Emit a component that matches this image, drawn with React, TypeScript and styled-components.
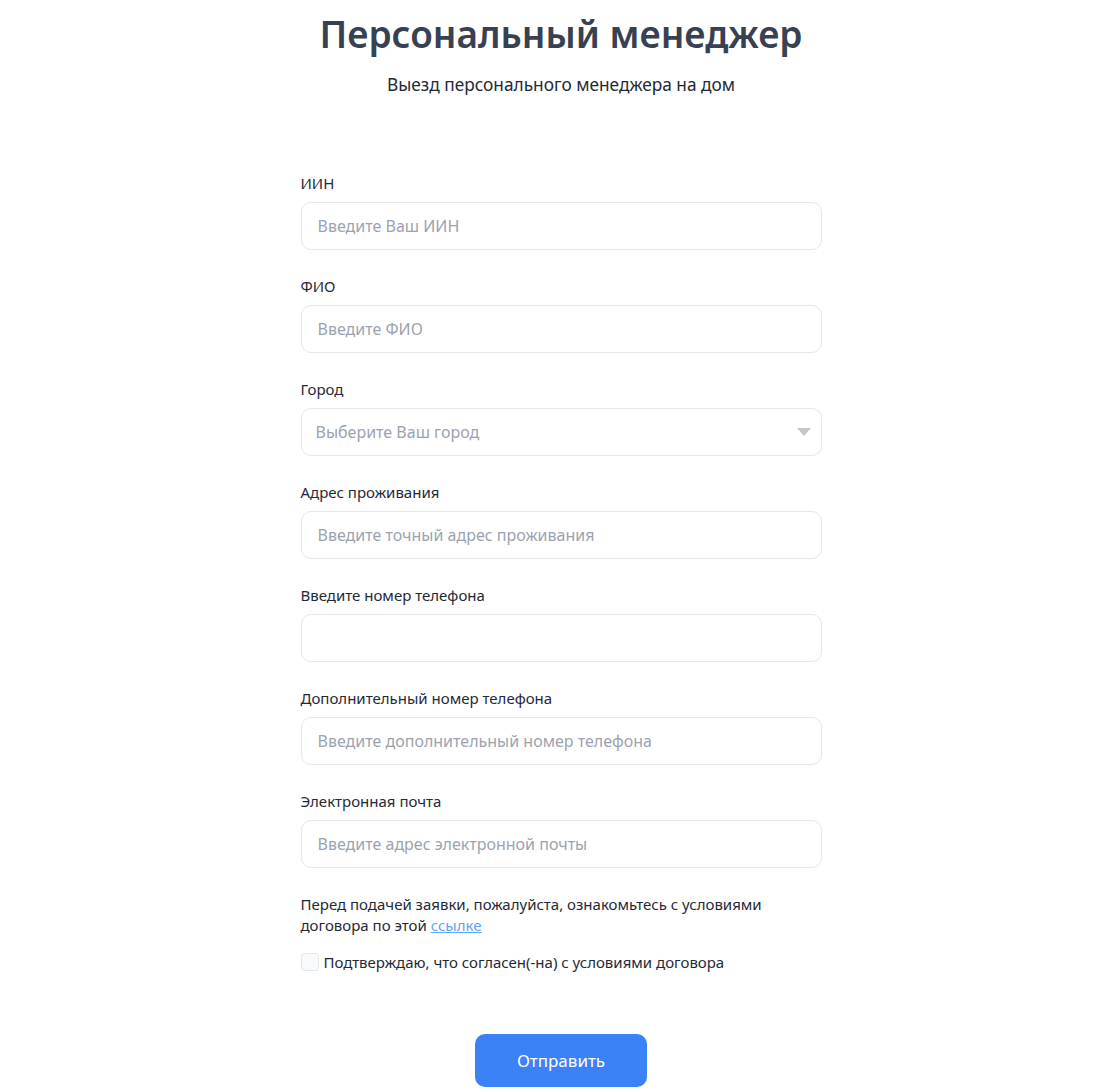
import React from "react";
import styled, { createGlobalStyle } from "styled-components";

const GlobalStyle = createGlobalStyle`
  html, body {
    margin: 0;
    padding: 0;
    background: #ffffff;
  }
  body {
    font-family: "Noto Sans", "Open Sans", Arial, sans-serif;
    color: #1f2937;
  }
`;

const Page = styled.main`
  display: flex;
  flex-direction: column;
  align-items: center;
  padding: 8px 0 0 2px;
`;

const Title = styled.h1`
  margin: 0;
  font-size: 37px;
  line-height: 52px;
  font-weight: 600;
  color: #374151;
`;

const Subtitle = styled.p`
  margin: 12px 0 0;
  font-size: 17.3px;
  line-height: 26px;
  color: #1f2937;
`;

const Form = styled.form`
  width: 521px;
  margin-top: 74px;
  display: flex;
  flex-direction: column;
  gap: 25px;
`;

const Field = styled.div`
  display: flex;
  flex-direction: column;
  gap: 8px;
`;

const Label = styled.label`
  font-size: 15px;
  line-height: 22px;
  color: #1f2937;
`;

const InputBox = styled.input`
  box-sizing: border-box;
  width: 100%;
  height: 48px;
  padding: 0 16px;
  border: 1px solid #e5e7eb;
  border-radius: 10px;
  font-family: inherit;
  font-size: 16px;
  color: #1f2937;
  background: #fff;
  outline: none;

  &::placeholder {
    color: #9ca3af;
  }
`;

const SelectWrap = styled.div`
  position: relative;
`;

const SelectBox = styled.select`
  box-sizing: border-box;
  width: 100%;
  height: 48px;
  padding: 0 40px 0 14px;
  border: 1px solid #e5e7eb;
  border-radius: 10px;
  font-family: inherit;
  font-size: 16px;
  color: #9ca3af;
  background: #fff;
  appearance: none;
  outline: none;
`;

const Arrow = styled.svg`
  position: absolute;
  right: 10px;
  top: 19px;
  pointer-events: none;
`;

const Notice = styled.p`
  margin: 1px 0 0;
  font-size: 15px;
  line-height: 21px;
  color: #1f2937;
  max-width: 470px;

  a {
    color: #60a5fa;
    text-decoration: underline;
  }
`;

const CheckRow = styled.label`
  display: flex;
  align-items: center;
  gap: 5px;
  margin-top: -10px;
  font-size: 15px;
  line-height: 22px;
  color: #1f2937;
`;

const CheckBox = styled.span`
  box-sizing: border-box;
  width: 18px;
  height: 18px;
  border: 1px solid #e5e7eb;
  border-radius: 3px;
  background: #f9fafb;
`;

const Actions = styled.div`
  display: flex;
  justify-content: center;
  margin-top: 36px;
`;

const SubmitButton = styled.button`
  width: 172px;
  height: 53px;
  border: none;
  border-radius: 10px;
  background: #3b82f6;
  color: #fff;
  font-family: inherit;
  font-size: 17px;
  cursor: pointer;
`;

type FieldDef = { label: string; placeholder: string };

const fields: FieldDef[] = [
  { label: "ИИН", placeholder: "Введите Ваш ИИН" },
  { label: "ФИО", placeholder: "Введите ФИО" },
];

const fieldsAfter: FieldDef[] = [
  { label: "Адрес проживания", placeholder: "Введите точный адрес проживания" },
  { label: "Введите номер телефона", placeholder: "" },
  {
    label: "Дополнительный номер телефона",
    placeholder: "Введите дополнительный номер телефона",
  },
  { label: "Электронная почта", placeholder: "Введите адрес электронной почты" },
];

const TextField: React.FC<FieldDef> = ({ label, placeholder }) => (
  <Field>
    <Label>{label}</Label>
    <InputBox type="text" placeholder={placeholder} />
  </Field>
);

export default function App() {
  return (
    <>
      <GlobalStyle />
      <Page>
        <Title>Персональный менеджер</Title>
        <Subtitle>Выезд персонального менеджера на дом</Subtitle>
        <Form onSubmit={(e) => e.preventDefault()}>
          {fields.map((f) => (
            <TextField key={f.label} {...f} />
          ))}
          <Field>
            <Label>Город</Label>
            <SelectWrap>
              <SelectBox defaultValue="">
                <option value="" disabled>
                  Выберите Ваш город
                </option>
              </SelectBox>
              <Arrow width="16" height="10" viewBox="0 0 16 10">
                <path d="M1 1h14L8 9z" fill="#c4c7cc" />
              </Arrow>
            </SelectWrap>
          </Field>
          {fieldsAfter.map((f) => (
            <TextField key={f.label} {...f} />
          ))}
          <Notice>
            Перед подачей заявки, пожалуйста, ознакомьтесь с условиями договора
            по этой <a href="#">ссылке</a>
          </Notice>
          <CheckRow>
            <CheckBox />
            Подтверждаю, что согласен(-на) с условиями договора
          </CheckRow>
          <Actions>
            <SubmitButton type="submit">Отправить</SubmitButton>
          </Actions>
        </Form>
      </Page>
    </>
  );
}
